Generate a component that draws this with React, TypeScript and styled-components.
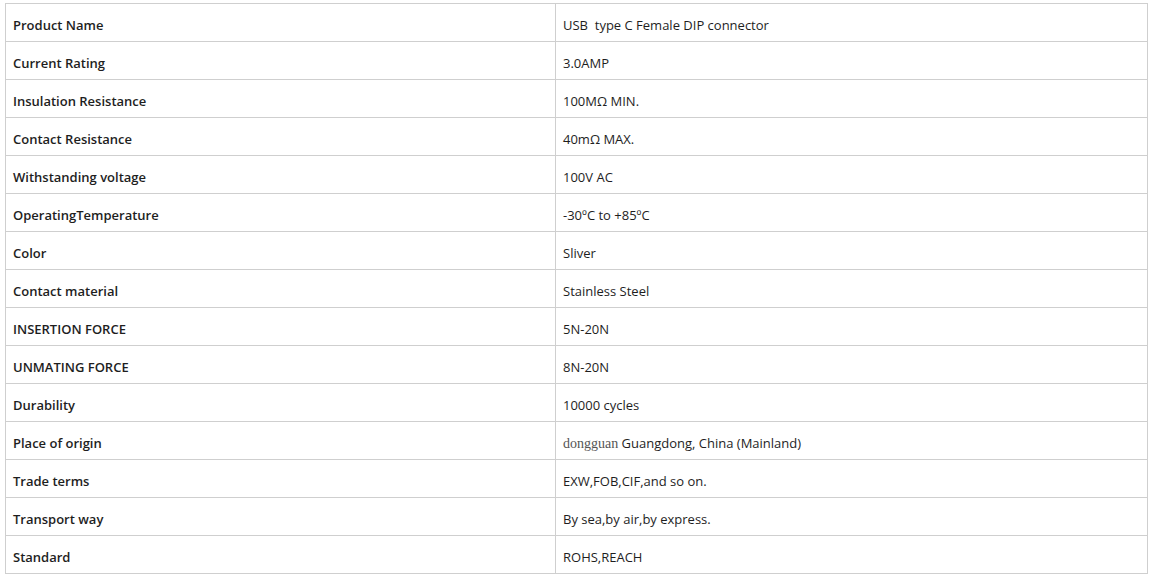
import * as React from "react";
import styled, { createGlobalStyle } from "styled-components";

const GlobalStyle = createGlobalStyle`
  body {
    margin: 0;
    background: #fff;
    font-family: "Open Sans", "Liberation Sans", sans-serif;
  }
`;

const Page = styled.div`
  padding: 3px 0 0 5px;
`;

const Table = styled.table`
  width: 1143px;
  border-collapse: collapse;
  table-layout: fixed;
  font-size: 13px;
  color: #1e1e1e;
`;

const Cell = styled.td<{ $label?: boolean }>`
  height: 38px;
  padding: 5px 0 0 7px;
  border: 1px solid #cfcfcf;
  vertical-align: middle;
  font-weight: ${(p) => (p.$label ? 600 : 400)};
  white-space: nowrap;
  box-sizing: border-box;
`;

const Serif = styled.span`
  font-family: "Liberation Serif", "DejaVu Serif", serif;
  font-size: 14px;
  color: #555;
`;

const rows: [string, React.ReactNode][] = [
  ["Product Name", "USB\u00a0 type C Female DIP connector"],
  ["Current Rating", "3.0AMP"],
  ["Insulation Resistance", "100MΩ MIN."],
  ["Contact Resistance", "40mΩ MAX."],
  ["Withstanding voltage", "100V AC"],
  ["OperatingTemperature", "-30ºC to +85ºC"],
  ["Color", "Sliver"],
  ["Contact material", "Stainless Steel"],
  ["INSERTION FORCE", "5N-20N"],
  ["UNMATING FORCE", "8N-20N"],
  ["Durability", "10000 cycles"],
  [
    "Place of origin",
    <>
      <Serif>dongguan</Serif> Guangdong, China (Mainland)
    </>,
  ],
  ["Trade terms", "EXW,FOB,CIF,and so on."],
  ["Transport way", "By sea,by air,by express."],
  ["Standard", "ROHS,REACH"],
];

export default function App() {
  return (
    <Page>
      <GlobalStyle />
      <Table>
        <colgroup>
          <col style={{ width: 550 }} />
          <col />
        </colgroup>
        <tbody>
          {rows.map(([label, value]) => (
            <tr key={label}>
              <Cell $label>{label}</Cell>
              <Cell>{value}</Cell>
            </tr>
          ))}
        </tbody>
      </Table>
    </Page>
  );
}
